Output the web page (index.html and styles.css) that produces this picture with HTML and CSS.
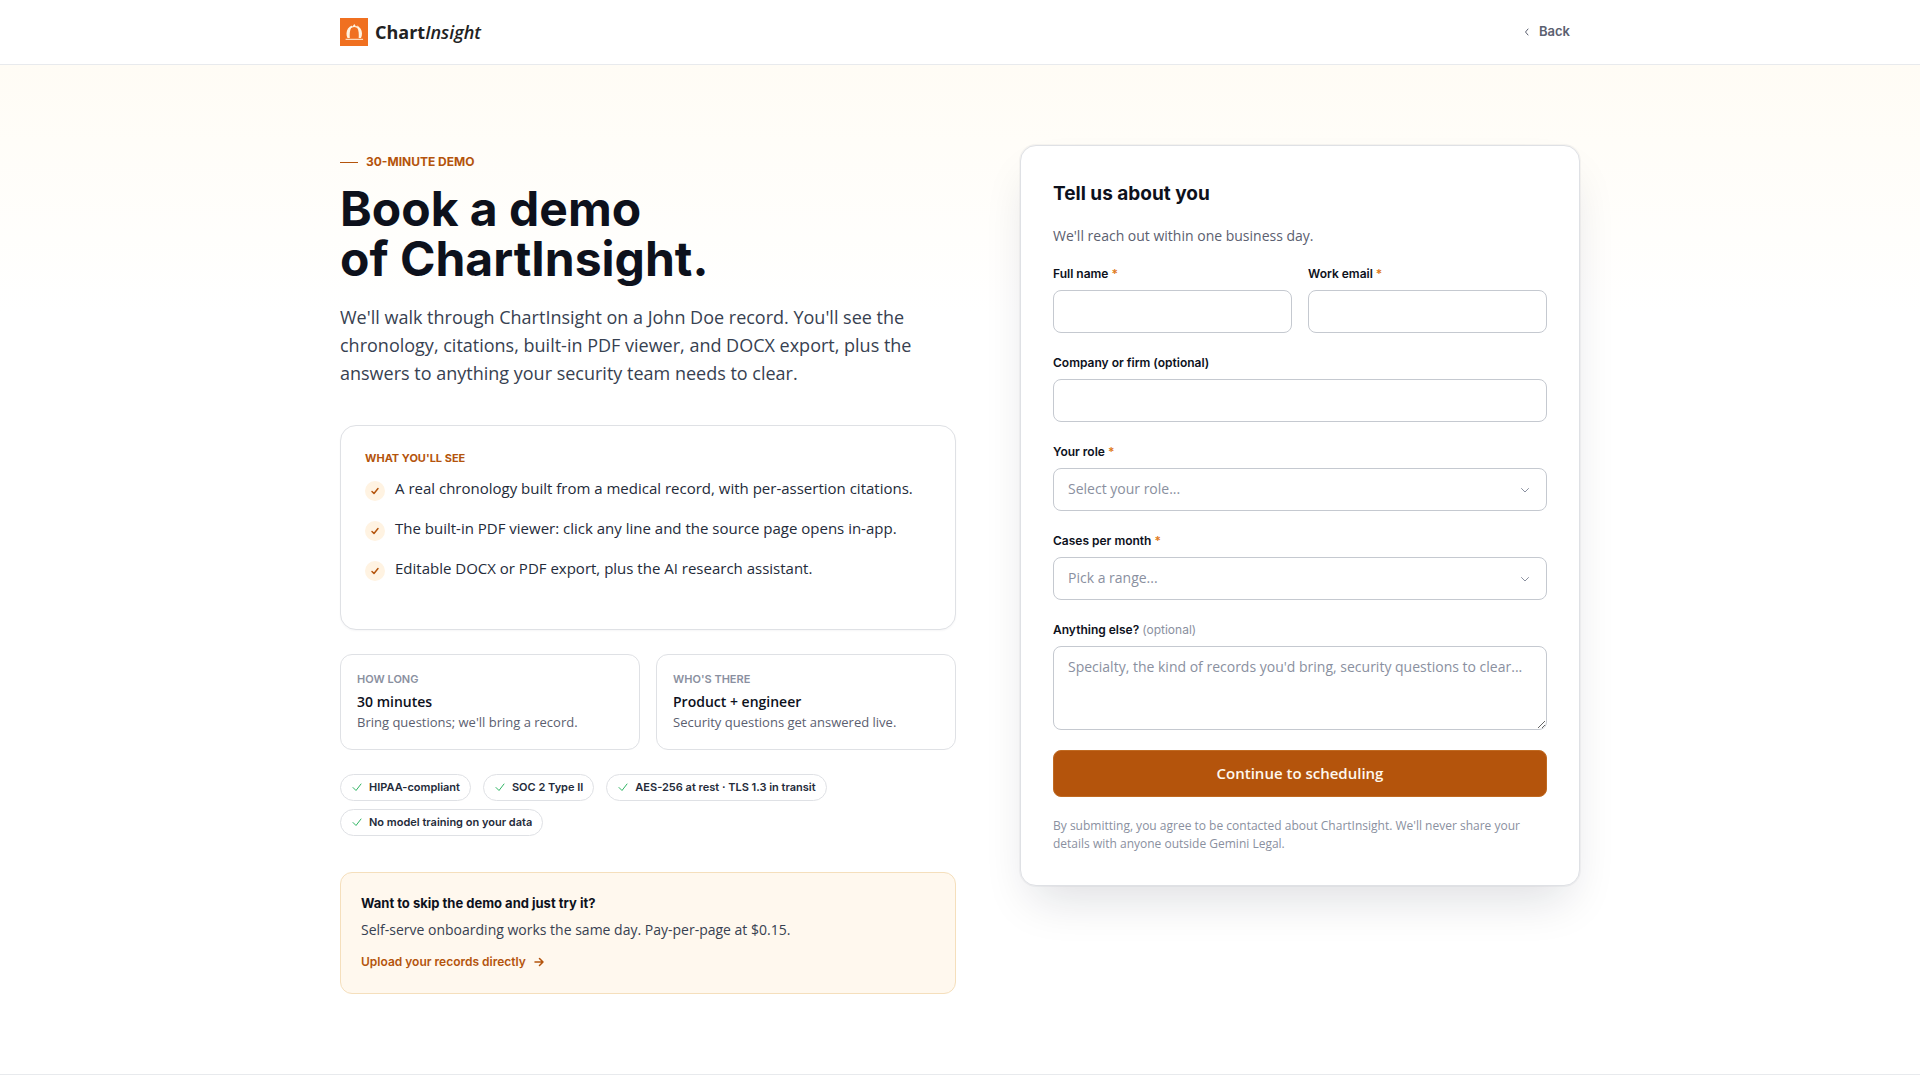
FILE: index.html
```html
<!DOCTYPE html>
<html lang="en">
<head>
<meta charset="UTF-8">
<meta name="viewport" content="width=device-width, initial-scale=1.0">
<title>Book a demo | ChartInsight</title>
<link rel="stylesheet" href="styles.css">
</head>
<body>
  <header class="site-header">
    <div class="container header-inner">
      <a class="brand" href="#">
        <svg class="brand-mark" viewBox="0 0 28 28" aria-hidden="true">
          <rect width="28" height="28" fill="#f07020"/>
          <path d="M6 21.300h16.700" stroke="#fff3e0" stroke-width="1"/>
          <g fill="#fff3e0">
            <path d="M7.500 20C6 17.500 6.200 13 8 10.500l2.500-2.500.8 1.500C9.800 12 9.500 16 9.800 20z"/>
            <path d="M21 20c1.500-2.500 1.300-7-.5-9.500L18 8l-.8 1.500c1.500 2.500 1.800 6.500 1.500 10.500z"/>
            <path d="M10.500 10.500l.5-3 1.500 1L14.300 6 16 8.500l1.500-1 .5 3c-1.200-1-2.300-1.500-3.700-1.600-1.500.1-2.600.6-3.800 1.600z"/>
          </g>
        </svg>
        <span class="brand-name">Chart<em>Insight</em></span>
      </a>
      <a class="back-link" href="#">
        <svg width="12" height="12" viewBox="0 0 12 12" aria-hidden="true"><path d="M7 4 4.500 7 7 10"/></svg>
        Back
      </a>
    </div>
  </header>

  <main class="demo">
    <div class="container demo-grid">
      <section class="intro">
        <p class="eyebrow">30-MINUTE DEMO</p>
        <h1>Book a demo<br>of ChartInsight.</h1>
        <p class="lead">We'll walk through ChartInsight on a John Doe record. You'll see the chronology, citations, built-in PDF viewer, and DOCX export, plus the answers to anything your security team needs to clear.</p>

        <div class="see-card">
          <h2>WHAT YOU'LL SEE</h2>
          <ul>
            <li><span class="tick"><svg viewBox="0 0 10 10"><path d="M2 5.500 4 7.500 8 2.500"/></svg></span>A real chronology built from a medical record, with per-assertion citations.</li>
            <li><span class="tick"><svg viewBox="0 0 10 10"><path d="M2 5.500 4 7.500 8 2.500"/></svg></span>The built-in PDF viewer: click any line and the source page opens in-app.</li>
            <li><span class="tick"><svg viewBox="0 0 10 10"><path d="M2 5.500 4 7.500 8 2.500"/></svg></span>Editable DOCX or PDF export, plus the AI research assistant.</li>
          </ul>
        </div>

        <div class="facts">
          <div class="fact">
            <h3>HOW LONG</h3>
            <strong>30 minutes</strong>
            <p>Bring questions; we'll bring a record.</p>
          </div>
          <div class="fact">
            <h3>WHO'S THERE</h3>
            <strong>Product + engineer</strong>
            <p>Security questions get answered live.</p>
          </div>
        </div>

        <ul class="pills">
          <li><svg viewBox="0 0 10 10"><path d="M1 5.500 4 8.500 9 2"/></svg>HIPAA-compliant</li>
          <li><svg viewBox="0 0 10 10"><path d="M1 5.500 4 8.500 9 2"/></svg>SOC 2 Type II</li>
          <li><svg viewBox="0 0 10 10"><path d="M1 5.500 4 8.500 9 2"/></svg>AES-256 at rest · TLS 1.3 in transit</li>
          <li><svg viewBox="0 0 10 10"><path d="M1 5.500 4 8.500 9 2"/></svg>No model training on your data</li>
        </ul>

        <div class="skip-card">
          <h2>Want to skip the demo and just try it?</h2>
          <p>Self-serve onboarding works the same day. Pay-per-page at $0.15.</p>
          <a href="#">Upload your records directly
            <svg width="10" height="10" viewBox="0 0 10 10" aria-hidden="true"><path d="M1 5h8M5.500 1.500 9 5 5.500 8.500"/></svg>
          </a>
        </div>
      </section>

      <form class="form-card">
        <h2>Tell us about you</h2>
        <p class="form-intro">We'll reach out within one business day.</p>
        <div class="field-row">
          <div class="field">
            <label for="name">Full name <span class="req">*</span></label>
            <input id="name" type="text">
          </div>
          <div class="field">
            <label for="email">Work email <span class="req">*</span></label>
            <input id="email" type="email">
          </div>
        </div>
        <div class="field">
          <label for="company">Company or firm (optional)</label>
          <input id="company" type="text">
        </div>
        <div class="field">
          <label for="role">Your role <span class="req">*</span></label>
          <div class="select-wrap">
            <select id="role">
              <option>Select your role...</option>
            </select>
            <svg viewBox="0 0 10 10" aria-hidden="true"><path d="M1.500 3.500 5 7l3.500-3.500"/></svg>
          </div>
        </div>
        <div class="field">
          <label for="cases">Cases per month <span class="req">*</span></label>
          <div class="select-wrap">
            <select id="cases">
              <option>Pick a range...</option>
            </select>
            <svg viewBox="0 0 10 10" aria-hidden="true"><path d="M1.500 3.500 5 7l3.500-3.500"/></svg>
          </div>
        </div>
        <div class="field">
          <label for="notes">Anything else? <span class="opt">(optional)</span></label>
          <textarea id="notes" placeholder="Specialty, the kind of records you'd bring, security questions to clear..."></textarea>
        </div>
        <button type="submit">Continue to scheduling</button>
        <p class="fine">By submitting, you agree to be contacted about ChartInsight. We'll never share your details with anyone outside Gemini Legal.</p>
      </form>
    </div>
  </main>
  <footer class="site-footer"></footer>
</body>
</html>
```
FILE: styles.css
```css
* {
  box-sizing: border-box;
}
body {
  margin: 0;
  font-family: "Open Sans", sans-serif;
  color: #374151;
  background: #fff;
}
h1, h2, h3, p, ul {
  margin: 0;
  padding: 0;
}
ul {
  list-style: none;
}
a {
  text-decoration: none;
}
svg {
  fill: none;
  stroke: currentColor;
  stroke-linecap: round;
  stroke-linejoin: round;
  flex: none;
}
.container {
  max-width: 1288px;
  margin: 0 auto;
  padding: 0 24px;
}

/* header */
.site-header {
  background: #fff;
  border-bottom: 1px solid #e8eaed;
}
.header-inner {
  display: flex;
  align-items: center;
  justify-content: space-between;
  height: 64px;
}
.brand {
  display: flex;
  align-items: center;
  gap: 7px;
  color: #222;
  font-size: 18px;
  font-weight: 700;
}
.brand em {
  font-weight: 600;
}
.brand-mark {
  width: 28px;
  height: 28px;
  stroke: none;
}
.back-link {
  display: flex;
  align-items: center;
  gap: 6px;
  padding: 0 10px 3px;
  font: 600 13px/20px Inter, sans-serif;
  color: #5b6070;
}

/* page */
.demo {
  padding: 80px 0;
  background: linear-gradient(180deg, #fffcf5 0, #fff 250px);
}
.demo-grid {
  display: grid;
  grid-template-columns: 11fr 10fr;
  gap: 64px;
  align-items: start;
}
.eyebrow {
  display: flex;
  align-items: center;
  gap: 8px;
  padding-top: 7px;
  font: 700 12px/20px Inter, sans-serif;
  color: #b4540c;
}
.eyebrow::before {
  content: "";
  width: 18px;
  height: 1px;
  background: #b4540c;
}
h1 {
  margin-top: 12px;
  font: 700 48px/50px Inter, sans-serif;
  color: #0d111c;
}
.lead {
  margin-top: 19px;
  font-size: 18px;
  line-height: 28px;
}

.see-card {
  margin-top: 38px;
  padding: 24px 24px 33px;
  border: 1px solid #dfe1e5;
  border-radius: 16px;
  background: #fff;
  box-shadow: 0 1px 2px rgba(16, 24, 40, 0.04);
}
.see-card h2 {
  font: 700 11px/16px Inter, sans-serif;
  color: #b4540c;
}
.see-card li {
  display: flex;
  gap: 10px;
  height: 40px;
  font-size: 15px;
  line-height: 24px;
  color: #242b3a;
}
.see-card ul {
  margin-top: 10px;
}
.tick {
  display: grid;
  place-items: center;
  width: 20px;
  height: 20px;
  margin-top: 5px;
  border-radius: 50%;
  background: #fff3e2;
  color: #b4540c;
}
.tick svg {
  width: 10px;
  height: 10px;
  stroke-width: 1.5;
}

.facts {
  display: grid;
  grid-template-columns: 1fr 1fr;
  gap: 16px;
  margin-top: 24px;
}
.fact {
  padding: 16px 16px 17px;
  border: 1px solid #dfe1e5;
  border-radius: 12px;
  background: #fff;
}
.fact h3 {
  font: 600 11px/16px Inter, sans-serif;
  color: #8a90a0;
}
.fact strong {
  display: block;
  margin-top: 5px;
  font-size: 14px;
  font-weight: 600;
  line-height: 20px;
  color: #0d111c;
}
.fact p {
  font-size: 13px;
  line-height: 20px;
  color: #5b6070;
}

.pills {
  display: flex;
  flex-wrap: wrap;
  gap: 8px 12px;
  margin-top: 24px;
}
.pills li {
  display: flex;
  align-items: center;
  gap: 7px;
  height: 27px;
  padding: 0 10px 1px 11px;
  border: 1px solid #dfe1e5;
  border-radius: 14px;
  font: 600 11px/16px Inter, sans-serif;
  color: #242b3a;
}
.pills svg {
  width: 10px;
  height: 10px;
  color: #2fb463;
}

.skip-card {
  margin-top: 36px;
  padding: 20px 20px 21px;
  border: 1px solid #f5dfbc;
  border-radius: 12px;
  background: #fff8ee;
}
.skip-card h2 {
  font: 700 13px/20px Inter, sans-serif;
  color: #0d111c;
}
.skip-card p {
  margin-top: 6px;
  font-size: 14px;
  line-height: 22px;
}
.skip-card a {
  display: inline-flex;
  align-items: center;
  gap: 8px;
  margin-top: 11px;
  font: 600 12px/20px Inter, sans-serif;
  color: #b4540c;
}
.skip-card svg {
  stroke-width: 1.5;
}

/* form */
.form-card {
  padding: 32px;
  border: 1px solid #dfe1e5;
  border-radius: 16px;
  background: #fff;
  box-shadow: 0 0 0 1px rgba(16, 24, 40, 0.04), 0 24px 48px -12px rgba(16, 24, 40, 0.14);
}
.form-card h2 {
  font: 700 19px/32px Inter, sans-serif;
  color: #0d111c;
}
.form-intro {
  margin: 16px 0 18px;
  font-size: 14px;
  line-height: 20px;
  color: #5b6070;
}
.field-row {
  display: grid;
  grid-template-columns: 1fr 1fr;
  gap: 16px;
}
.field {
  display: flex;
  flex-direction: column;
  gap: 6px;
  margin-bottom: 20px;
}
label {
  font: 600 12px/20px Inter, sans-serif;
  color: #0d111c;
}
.req {
  color: #e07a1a;
}
.opt {
  font-weight: 400;
  color: #8a90a0;
}
input, select, textarea {
  display: block;
  width: 100%;
  height: 43px;
  padding: 0 14px 1px;
  border: 1px solid #c5c9d0;
  border-radius: 8px;
  background: #fff;
  font: 14px/20px "Open Sans", sans-serif;
  color: #8a90a0;
}
select {
  appearance: none;
}
textarea {
  height: 84px;
  padding: 10px 14px;
  resize: vertical;
}
textarea::placeholder {
  color: #8a90a0;
}
.select-wrap {
  position: relative;
}
.select-wrap svg {
  position: absolute;
  right: 17px;
  top: 17px;
  width: 10px;
  height: 10px;
  color: #8a90a0;
  pointer-events: none;
}
button {
  width: 100%;
  height: 47px;
  padding: 0 16px 2px;
  border: 1px solid #c06a22;
  border-radius: 8px;
  background: #b4540c;
  color: #fff8ee;
  font: 600 15px/20px "Open Sans", sans-serif;
  cursor: pointer;
}
.fine {
  margin-top: 20px;
  font-size: 12px;
  line-height: 18px;
  color: #8a90a0;
}

.site-footer {
  border-top: 1px solid #e8eaed;
}
```
